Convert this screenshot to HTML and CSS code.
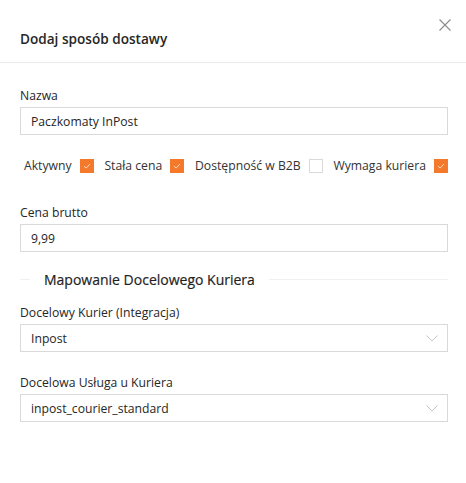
FILE: index.html
```html
<!DOCTYPE html>
<html lang="pl">
<head>
<meta charset="utf-8">
<title>Dodaj sposób dostawy</title>
<link rel="stylesheet" href="styles.css">
</head>
<body>
<div class="modal">
  <header class="modal-header">
    <h1 class="modal-title">Dodaj sposób dostawy</h1>
    <button class="close" aria-label="Zamknij">
      <svg width="12" height="12" viewBox="0 0 12 12"><path d="M0.5 0.5 L11.5 11.5 M11.5 0.5 L0.5 11.5" stroke="#8c8c8c" stroke-width="1.1" fill="none"/></svg>
    </button>
  </header>
  <div class="modal-body">
    <div class="field">
      <label class="label">Nazwa</label>
      <div class="input">Paczkomaty InPost</div>
    </div>

    <div class="checks">
      <div class="check"><span>Aktywny</span><span class="box on"><svg viewBox="0 0 14 14"><path d="M3.6 7.2 L6 9.4 L10.4 4.8" fill="none" stroke="#ffe3c8" stroke-width="1.1"/></svg></span></div>
      <div class="check"><span>Stała cena</span><span class="box on"><svg viewBox="0 0 14 14"><path d="M3.6 7.2 L6 9.4 L10.4 4.8" fill="none" stroke="#ffe3c8" stroke-width="1.1"/></svg></span></div>
      <div class="check"><span>Dostępność w B2B</span><span class="box"></span></div>
      <div class="check"><span>Wymaga kuriera</span><span class="box on"><svg viewBox="0 0 14 14"><path d="M3.6 7.2 L6 9.4 L10.4 4.8" fill="none" stroke="#ffe3c8" stroke-width="1.1"/></svg></span></div>
    </div>

    <div class="field field-price">
      <label class="label">Cena brutto</label>
      <div class="input">9,99</div>
    </div>

    <div class="divider"><span class="divider-text">Mapowanie Docelowego Kuriera</span></div>

    <div class="field field-courier">
      <label class="label">Docelowy Kurier (Integracja)</label>
      <div class="input select"><span>Inpost</span>
        <svg class="chev" width="12" height="7" viewBox="0 0 12 7"><path d="M0.5 0.5 L6 6 L11.5 0.5" fill="none" stroke="#c4c4c4" stroke-width="1"/></svg>
      </div>
    </div>

    <div class="field field-service">
      <label class="label">Docelowa Usługa u Kuriera</label>
      <div class="input select"><span>inpost_courier_standard</span>
        <svg class="chev" width="12" height="7" viewBox="0 0 12 7"><path d="M0.5 0.5 L6 6 L11.5 0.5" fill="none" stroke="#c4c4c4" stroke-width="1"/></svg>
      </div>
    </div>
  </div>
</div>
</body>
</html>
```

FILE: styles.css
```css
* { box-sizing: border-box; }
html, body {
  margin: 0;
  padding: 0;
  background: #fff;
}
body {
  font-family: "Open Sans", "Noto Sans", sans-serif;
  font-size: 12px;
  color: #333;
}
.modal {
  position: relative;
  width: 466px;
  height: 483px;
  background: #fff;
}
.modal-header {
  height: 63px;
  padding: 28px 20px 0;
  border-bottom: 1px solid #ececec;
}
.modal-title {
  margin: 0;
  font-size: 13.6px;
  font-weight: 600;
  line-height: 22px;
  color: #262626;
}
.close {
  position: absolute;
  top: 18px;
  right: 14px;
  width: 14px;
  height: 14px;
  padding: 1px;
  border: 0;
  background: none;
  display: flex;
  align-items: center;
  justify-content: center;
}
.modal-body {
  padding: 22px 18px 0 20px;
}
.field {
  display: flex;
  flex-direction: column;
}
.label {
  height: 22px;
  line-height: 22px;
  font-size: 12.2px;
  color: #262626;
}
.input {
  height: 28px;
  border: 1px solid #d9d9d9;
  padding: 0 10px;
  display: flex;
  align-items: center;
  font-size: 12.2px;
  color: #262626;
}
.select {
  justify-content: space-between;
}
.chev {
  display: block;
  margin-right: -1px;
}
.checks {
  margin-top: 20px;
  height: 22px;
  display: flex;
  align-items: center;
  justify-content: space-between;
  padding-left: 4px;
}
.check {
  display: flex;
  align-items: center;
  gap: 8px;
  font-size: 12.2px;
  color: #333;
  line-height: 22px;
  white-space: nowrap;
}
.box {
  flex: none;
  width: 14px;
  height: 14px;
  border: 1px solid #d9d9d9;
  background: #fff;
  display: block;
}
.box.on {
  border-color: #f5792a;
  background: #f5792a;
}
.box svg {
  display: block;
  width: 12px;
  height: 12px;
}
.field-price { margin-top: 25px; }
.divider {
  margin-top: 16px;
  height: 22px;
  display: flex;
  align-items: center;
}
.divider::before,
.divider::after {
  content: "";
  height: 1px;
  background: #f0f0f0;
}
.divider::before { width: 10px; }
.divider::after { flex: 1; }
.divider-text {
  padding: 0 14px;
  font-size: 14px;
  font-weight: 400;
  color: #1f1f1f;
  -webkit-text-stroke: 0.2px #1f1f1f;
}
.field-courier { margin-top: 12px; }
.field-service { margin-top: 20px; }
```
